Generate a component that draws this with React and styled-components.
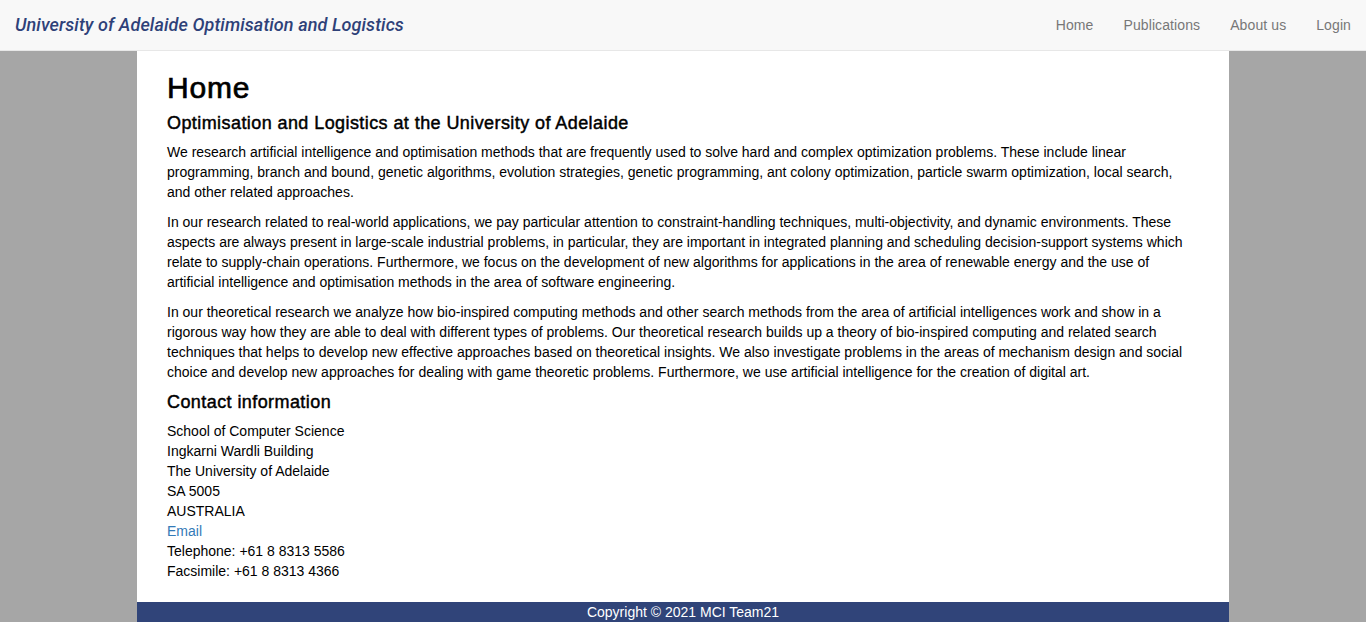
import React from "react";
import styled, { createGlobalStyle } from "styled-components";

const Global = createGlobalStyle`
  html, body { margin: 0; padding: 0; }
  body {
    background: #a6a6a6;
    font-family: "Liberation Sans", Arial, Helvetica, sans-serif;
    font-size: 14px;
    line-height: 20px;
    color: #000;
  }
  * { box-sizing: border-box; }
`;

const Page = styled.div`
  min-height: 100vh;
  display: flex;
  flex-direction: column;
`;

const NavBar = styled.nav`
  height: 51px;
  background: #f8f8f8;
  border-bottom: 1px solid #e7e7e7;
  display: flex;
  align-items: center;
  justify-content: space-between;
`;

const Brand = styled.a`
  padding: 0 15px;
  font-family: Roboto, "Liberation Sans", sans-serif;
  font-style: italic;
  font-weight: 500;
  font-size: 18px;
  letter-spacing: 0.1px;
  color: #2e4178;
  text-decoration: none;
`;

const NavList = styled.ul`
  display: flex;
  list-style: none;
  margin: 0;
  padding: 0;
`;

const NavLink = styled.a`
  display: block;
  padding: 15px;
  line-height: 20px;
  font-size: 14px;
  letter-spacing: 0.1px;
  color: #777;
  text-decoration: none;
`;

const Main = styled.main`
  width: 1092px;
  margin: 0 auto;
  background: #fff;
  padding: 20px 30px 21px;
  flex: 1;
`;

const Title = styled.h1`
  font-size: 30px;
  font-weight: 400;
  line-height: 33px;
  margin: 0 0 9px;
  letter-spacing: 0.8px;
  -webkit-text-stroke: 0.7px #000;
`;

const Subtitle = styled.h2`
  font-size: 18px;
  font-weight: 400;
  line-height: 20px;
  margin: 0 0 9px;
  letter-spacing: 0.42px;
  -webkit-text-stroke: 0.45px #000;
`;

const Para = styled.p`
  margin: 0 0 10px;
`;

const Address = styled.div`
  display: flex;
  flex-direction: column;
`;

const MailLink = styled.a`
  color: #337ab7;
  text-decoration: none;
`;

const Footer = styled.footer`
  width: 1092px;
  margin: 0 auto;
  height: 20px;
  background: #304479;
  color: #fff;
  text-align: center;
  font-size: 14px;
  line-height: 20px;
`;

const links = ["Home", "Publications", "About us", "Login"];

export default function App() {
  return (
    <Page>
      <Global />
      <NavBar>
        <Brand href="#">University of Adelaide Optimisation and Logistics</Brand>
        <NavList>
          {links.map((l) => (
            <li key={l}>
              <NavLink href="#">{l}</NavLink>
            </li>
          ))}
        </NavList>
      </NavBar>
      <Main>
        <Title>Home</Title>
        <Subtitle>Optimisation and Logistics at the University of Adelaide</Subtitle>
        <Para>
          We research artificial intelligence and optimisation methods that are frequently used to solve hard and complex optimization problems. These include linear programming, branch and bound, genetic algorithms, evolution strategies, genetic programming, ant colony optimization, particle swarm optimization, local search, and other related approaches.
        </Para>
        <Para>
          In our research related to real-world applications, we pay particular attention to constraint-handling techniques, multi-objectivity, and dynamic environments. These aspects are always present in large-scale industrial problems, in particular, they are important in integrated planning and scheduling decision-support systems which relate to supply-chain operations. Furthermore, we focus on the development of new algorithms for applications in the area of renewable energy and the use of artificial intelligence and optimisation methods in the area of software engineering.
        </Para>
        <Para>
          In our theoretical research we analyze how bio-inspired computing methods and other search methods from the area of artificial intelligences work and show in a rigorous way how they are able to deal with different types of problems. Our theoretical research builds up a theory of bio-inspired computing and related search techniques that helps to develop new effective approaches based on theoretical insights. We also investigate problems in the areas of mechanism design and social choice and develop new approaches for dealing with game theoretic problems. Furthermore, we use artificial intelligence for the creation of digital art.
        </Para>
        <Subtitle>Contact information</Subtitle>
        <Address>
          <span>School of Computer Science</span>
          <span>Ingkarni Wardli Building</span>
          <span>The University of Adelaide</span>
          <span>SA 5005</span>
          <span>AUSTRALIA</span>
          <MailLink href="#">Email</MailLink>
          <span>Telephone: +61 8 8313 5586</span>
          <span>Facsimile: +61 8 8313 4366</span>
        </Address>
      </Main>
      <Footer>Copyright © 2021 MCI Team21</Footer>
    </Page>
  );
}
